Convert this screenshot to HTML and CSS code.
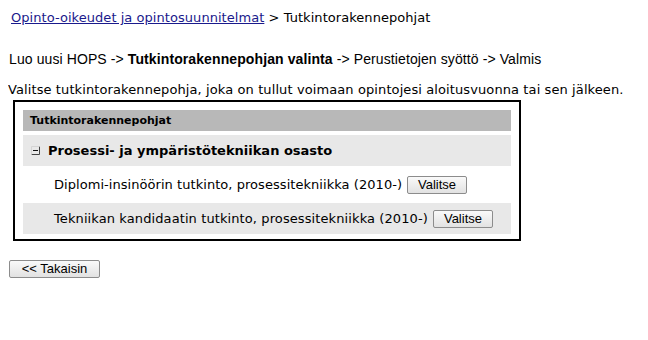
FILE: index.html
```html
<!DOCTYPE html>
<html lang="fi">
<head>
    <meta charset="UTF-8">
    <title>Tutkintorakennepohjat</title>
    <link rel="stylesheet" href="styles.css">
</head>
<body>

    <div class="breadcrumb">
        <a href="#">Opinto-oikeudet ja opintosuunnitelmat</a> &gt; Tutkintorakennepohjat
    </div>

    <div class="wizard">
        Luo uusi HOPS -&gt; <b>Tutkintorakennepohjan valinta</b> -&gt; Perustietojen syöttö -&gt; Valmis
    </div>

    <p class="intro">Valitse tutkintorakennepohja, joka on tullut voimaan opintojesi aloitusvuonna tai sen jälkeen.</p>

    <div class="tree-box">
        <div class="tree-header">Tutkintorakennepohjat</div>
        <div class="tree-group">
            <svg class="collapse" width="9" height="9" viewBox="0 0 9 9">
                <path d="M0.5 8.5 H8.5 V0.5" fill="none" stroke="#444" stroke-width="1"/>
                <path d="M0.5 0.5 V8.5 M0.5 0.5 H8.5" fill="none" stroke="#d4d4d4" stroke-width="1"/>
                <path d="M2 4.5 H7" stroke="#111" stroke-width="1"/>
            </svg>
            Prosessi- ja ympäristötekniikan osasto
        </div>
        <div class="tree-item">
            Diplomi-insinöörin tutkinto, prosessitekniikka (2010-)
            <button class="btn">Valitse</button>
        </div>
        <div class="tree-item alt">
            Tekniikan kandidaatin tutkinto, prosessitekniikka (2010-)
            <button class="btn">Valitse</button>
        </div>
    </div>

    <button class="btn back-btn">&lt;&lt; Takaisin</button>

</body>
</html>
```

FILE: styles.css
```css
body {
    margin: 8px;
    font-family: 'DejaVu Sans', Verdana, sans-serif;
    font-size: 13px;
    color: #000;
    background: #fff;
}

/* Breadcrumb */
.breadcrumb {
    margin: 2px 0 0 3px;
    line-height: 16px;
    letter-spacing: 0.05px;
}

.breadcrumb a {
    color: #1a1a8c;
}

/* Wizard steps */
.wizard {
    margin-top: 25px;
    margin-left: 1px;
    font-family: 'Liberation Sans', Arial, sans-serif;
    font-size: 14px;
    line-height: 16px;
    letter-spacing: 0.1px;
}

.intro {
    margin: 15px 0 0 0;
    line-height: 16px;
    letter-spacing: 0.1px;
}

/* Tree box */
.tree-box {
    margin: 2px 0 0 5px;
    width: 488px;
    border: 2px solid #000;
    padding: 8px 8px 5px 8px;
}

.tree-header {
    background-color: #b8b8b8;
    font-size: 11px;
    font-weight: bold;
    height: 21px;
    line-height: 21px;
    padding-left: 7px;
}

.tree-group {
    background-color: #e8e8e8;
    margin-top: 4px;
    height: 31px;
    display: flex;
    align-items: center;
    font-weight: bold;
    font-size: 13px;
    padding-left: 8px;
}

.collapse {
    margin-right: 8px;
}

.tree-item {
    height: 31px;
    display: flex;
    align-items: center;
    padding-left: 31px;
    margin-top: 3px;
    letter-spacing: 0.05px;
}

.tree-item.alt {
    background-color: #e8e8e8;
    letter-spacing: 0.1px;
}

/* Buttons */
.btn {
    font-family: 'Liberation Sans', Arial, sans-serif;
    font-size: 13px;
    letter-spacing: 0;
    color: #000;
    height: 18px;
    padding: 0 6px;
    margin-left: 5px;
    border: 1px solid #8c8c8c;
    border-radius: 2px;
    background: linear-gradient(#fafafa, #e2e2e2);
    line-height: 14px;
}

.tree-item .btn {
    width: 60px;
}

.back-btn {
    display: block;
    margin: 19px 0 0 1px;
    width: 91px;
}
```
